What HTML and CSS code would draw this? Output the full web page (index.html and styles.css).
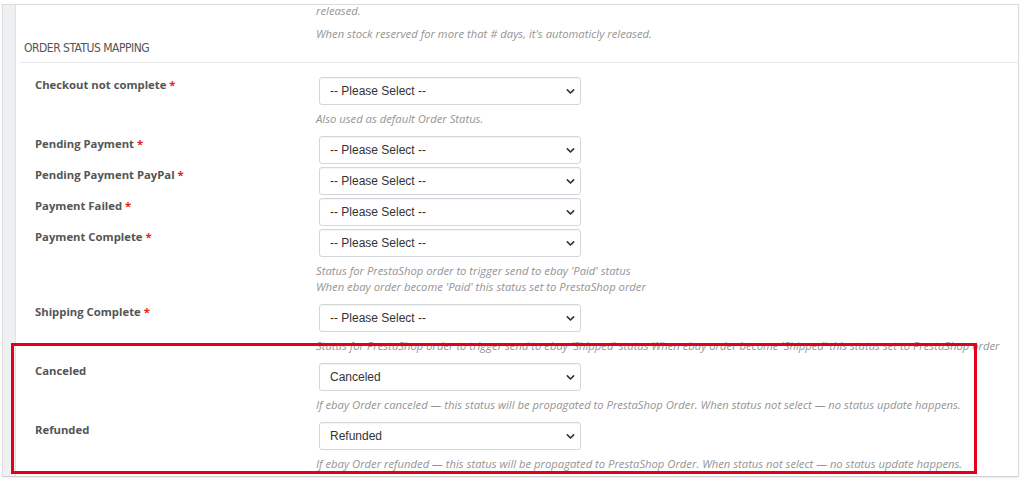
FILE: index.html
```html
<!DOCTYPE html>
<html>
<head>
<meta charset="utf-8">
<link rel="stylesheet" href="styles.css">
</head>
<body>
<div class="page">
  <div class="panel">
    <div class="strip"></div>
    <div class="content">
      <p class="help top-help first">released.</p>
      <p class="help top-help second">When stock reserved for more that # days, it's automaticly released.</p>
      <h3 class="heading">ORDER STATUS MAPPING</h3>
      <div class="form">
        <div class="row">
          <label class="lbl">Checkout not complete <span class="req">*</span></label>
          <div class="field">
            <div class="sel"><select><option>-- Please Select --</option></select><svg class="chev" viewBox="0 0 10 10"><path d="M1.5 3.2 L5 6.7 L8.5 3.2"/></svg></div>
            <p class="help">Also used as default Order Status.</p>
          </div>
        </div>
        <div class="row tight">
          <label class="lbl">Pending Payment <span class="req">*</span></label>
          <div class="field">
            <div class="sel"><select><option>-- Please Select --</option></select><svg class="chev" viewBox="0 0 10 10"><path d="M1.5 3.2 L5 6.7 L8.5 3.2"/></svg></div>
          </div>
        </div>
        <div class="row tight">
          <label class="lbl">Pending Payment PayPal <span class="req">*</span></label>
          <div class="field">
            <div class="sel"><select><option>-- Please Select --</option></select><svg class="chev" viewBox="0 0 10 10"><path d="M1.5 3.2 L5 6.7 L8.5 3.2"/></svg></div>
          </div>
        </div>
        <div class="row tight">
          <label class="lbl">Payment Failed <span class="req">*</span></label>
          <div class="field">
            <div class="sel"><select><option>-- Please Select --</option></select><svg class="chev" viewBox="0 0 10 10"><path d="M1.5 3.2 L5 6.7 L8.5 3.2"/></svg></div>
          </div>
        </div>
        <div class="row">
          <label class="lbl">Payment Complete <span class="req">*</span></label>
          <div class="field">
            <div class="sel"><select><option>-- Please Select --</option></select><svg class="chev" viewBox="0 0 10 10"><path d="M1.5 3.2 L5 6.7 L8.5 3.2"/></svg></div>
            <p class="help">Status for PrestaShop order to trigger send to ebay 'Paid' status<br>When ebay order become 'Paid' this status set to PrestaShop order</p>
          </div>
        </div>
        <div class="row">
          <label class="lbl">Shipping Complete <span class="req">*</span></label>
          <div class="field">
            <div class="sel"><select><option>-- Please Select --</option></select><svg class="chev" viewBox="0 0 10 10"><path d="M1.5 3.2 L5 6.7 L8.5 3.2"/></svg></div>
            <p class="help nowrap">Status for PrestaShop order to trigger send to ebay 'Shipped' status When ebay order become 'Shipped' this status set to PrestaShop order</p>
          </div>
        </div>
        <div class="row">
          <label class="lbl">Canceled</label>
          <div class="field">
            <div class="sel"><select><option>Canceled</option></select><svg class="chev" viewBox="0 0 10 10"><path d="M1.5 3.2 L5 6.7 L8.5 3.2"/></svg></div>
            <p class="help nowrap">If ebay Order canceled — this status will be propagated to PrestaShop Order. When status not select — no status update happens.</p>
          </div>
        </div>
        <div class="row last">
          <label class="lbl">Refunded</label>
          <div class="field">
            <div class="sel"><select><option>Refunded</option></select><svg class="chev" viewBox="0 0 10 10"><path d="M1.5 3.2 L5 6.7 L8.5 3.2"/></svg></div>
            <p class="help nowrap">If ebay Order refunded — this status will be propagated to PrestaShop Order. When status not select — no status update happens.</p>
          </div>
        </div>
      </div>
    </div>
  </div>
  <div class="highlight"></div>
</div>
</body>
</html>
```

FILE: styles.css
```css
* { box-sizing: border-box; }
html, body { margin: 0; padding: 0; background: #fff; }
body { width: 1024px; height: 482px; overflow: hidden; font-family: "Open Sans", "DejaVu Sans", sans-serif; }

.page { position: relative; padding: 4px 5px 0 2px; }

.panel {
  display: flex;
  border: 1px solid #dcdcdc;
  border-bottom-color: #d0d0d0;
  box-shadow: 0 1px 2px rgba(0,0,0,0.08);
  background: #fff;
  overflow: hidden;
}
.strip {
  width: 13px;
  flex: none;
  background: #eef0f2;
  border-right: 1px solid #dfe2e5;
}
.content { flex: 1; padding: 0 0 4px 0; }

.help {
  margin: 0;
  font-size: 11.25px;
  line-height: 16px;
  font-style: italic;
  color: #959595;
}
.nowrap { white-space: nowrap; }
.top-help { padding-left: 300px; }
.first { margin-top: 0; line-height: 12px; }
.second { margin-top: 9px; }

.heading {
  margin: -3px 0 0 4px;
  padding: 0 0 5px 4px;
  font-family: "Liberation Sans Narrow", "DejaVu Sans Condensed", sans-serif;
  font-weight: normal;
  font-size: 12px;
  letter-spacing: -0.5px;
  line-height: 18px;
  color: #555;
  border-bottom: 1px solid #e8e8e8;
}

.form { padding-top: 14px; }
.row {
  display: grid;
  grid-template-columns: 300px 1fr;
  margin-bottom: 9px;
}
.row.tight { margin-bottom: 3px; }
.row.last { margin-bottom: 0; }
.lbl {
  padding-left: 19px;
  font-weight: bold;
  font-size: 11.3px;
  line-height: 16px;
  color: #555;
}
.req { color: #e8231b; }
.field { min-width: 0; }

.sel { position: relative; width: 262px; margin-left: 3px; }
.sel select {
  -webkit-appearance: none;
  appearance: none;
  display: block;
  width: 262px;
  height: 28px;
  padding: 0 24px 0 10px;
  border: 1px solid #d3d6da;
  border-radius: 3px;
  background: #fff;
  box-shadow: inset 0 1px 1px rgba(0,0,0,0.04);
  font-family: "Liberation Sans", Arial, sans-serif;
  font-size: 12px;
  color: #333;
}
.chev {
  position: absolute;
  right: 6px;
  top: 10px;
  width: 9px;
  height: 9px;
  fill: none;
  stroke: #333;
  stroke-width: 1.8;
  stroke-linecap: round;
  stroke-linejoin: round;
}
.field .help { margin-top: 6px; }

.highlight {
  position: absolute;
  left: 11px;
  top: 343px;
  width: 966px;
  height: 131px;
  border: 3px solid #e2001a;
  pointer-events: none;
}
```
